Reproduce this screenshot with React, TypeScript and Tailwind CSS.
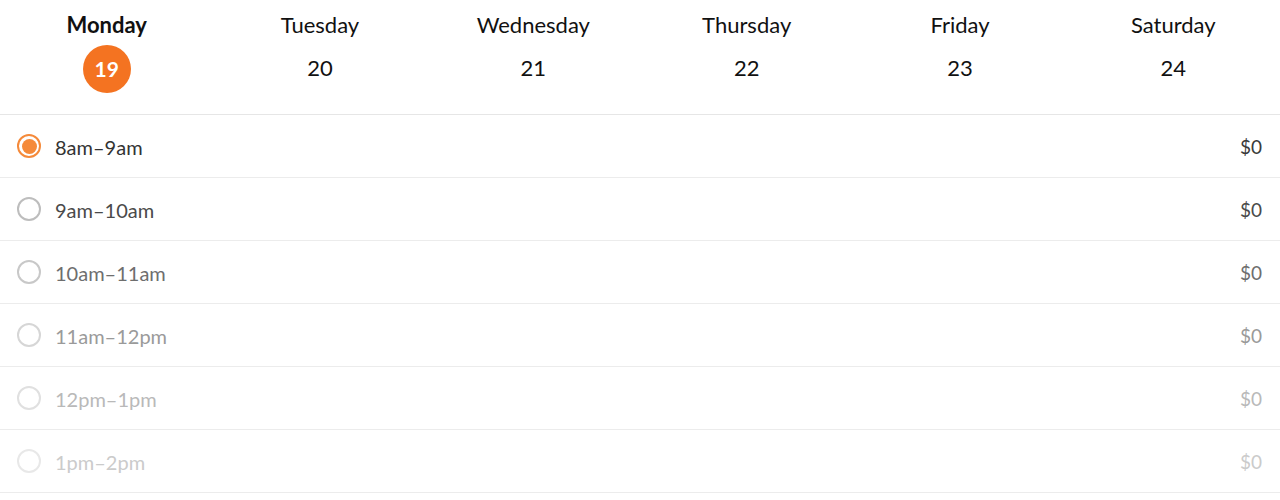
import React from "react";

const days = [
  { name: "Monday", num: "19", selected: true },
  { name: "Tuesday", num: "20" },
  { name: "Wednesday", num: "21" },
  { name: "Thursday", num: "22" },
  { name: "Friday", num: "23" },
  { name: "Saturday", num: "24" },
];

const slots = [
  { label: "8am–9am", text: "text-[#333333]", price: "text-[#3a3a3a]", ring: "border-[#f58a3a]", selected: true },
  { label: "9am–10am", text: "text-[#4a4a4a]", price: "text-[#4a4a4a]", ring: "border-[#bdbdbd]" },
  { label: "10am–11am", text: "text-[#6e6e6e]", price: "text-[#6e6e6e]", ring: "border-[#c8c8c8]" },
  { label: "11am–12pm", text: "text-[#9a9a9a]", price: "text-[#9a9a9a]", ring: "border-[#d6d6d6]" },
  { label: "12pm–1pm", text: "text-[#b9b9b9]", price: "text-[#b9b9b9]", ring: "border-[#e0e0e0]" },
  { label: "1pm–2pm", text: "text-[#cbcbcb]", price: "text-[#cbcbcb]", ring: "border-[#e8e8e8]" },
];

export default function App() {
  return (
    <div className="w-[1280px] h-[500px] bg-white overflow-hidden" style={{ fontFamily: "Lato, 'Open Sans', sans-serif" }}>
      <div className="grid grid-cols-6 border-b border-[#e6e6e6] h-[115px] pt-[10px]">
        {days.map((d) => (
          <div key={d.name} className="flex flex-col items-center">
            <div className={`h-[30px] leading-[30px] text-[22px] text-[#111] ${d.selected ? "font-bold" : "font-normal"}`}>
              {d.name}
            </div>
            <div className="mt-[5px] h-[48px] w-[48px] flex items-center justify-center">
              {d.selected ? (
                <div className="h-[48px] w-[48px] rounded-full bg-[#f47321] flex items-center justify-center text-white font-bold text-[21px]">
                  {d.num}
                </div>
              ) : (
                <span className="text-[22px] text-[#111] pb-[4px]">{d.num}</span>
              )}
            </div>
          </div>
        ))}
      </div>
      {slots.map((s) => (
        <div key={s.label} className="flex items-center h-[63px] border-b border-[#ececec] pl-[17px] pr-[18px]">
          <div className={`h-[24px] w-[24px] rounded-full border-2 ${s.ring} flex items-center justify-center`}>
            {s.selected && <div className="h-[15px] w-[15px] rounded-full bg-[#f58a3a]" />}
          </div>
          <div className={`ml-[14px] text-[20px] pt-[2px] ${s.text}`}>{s.label}</div>
          <div className={`ml-auto text-[19px] pt-[2px] ${s.price}`}>$0</div>
        </div>
      ))}
    </div>
  );
}
